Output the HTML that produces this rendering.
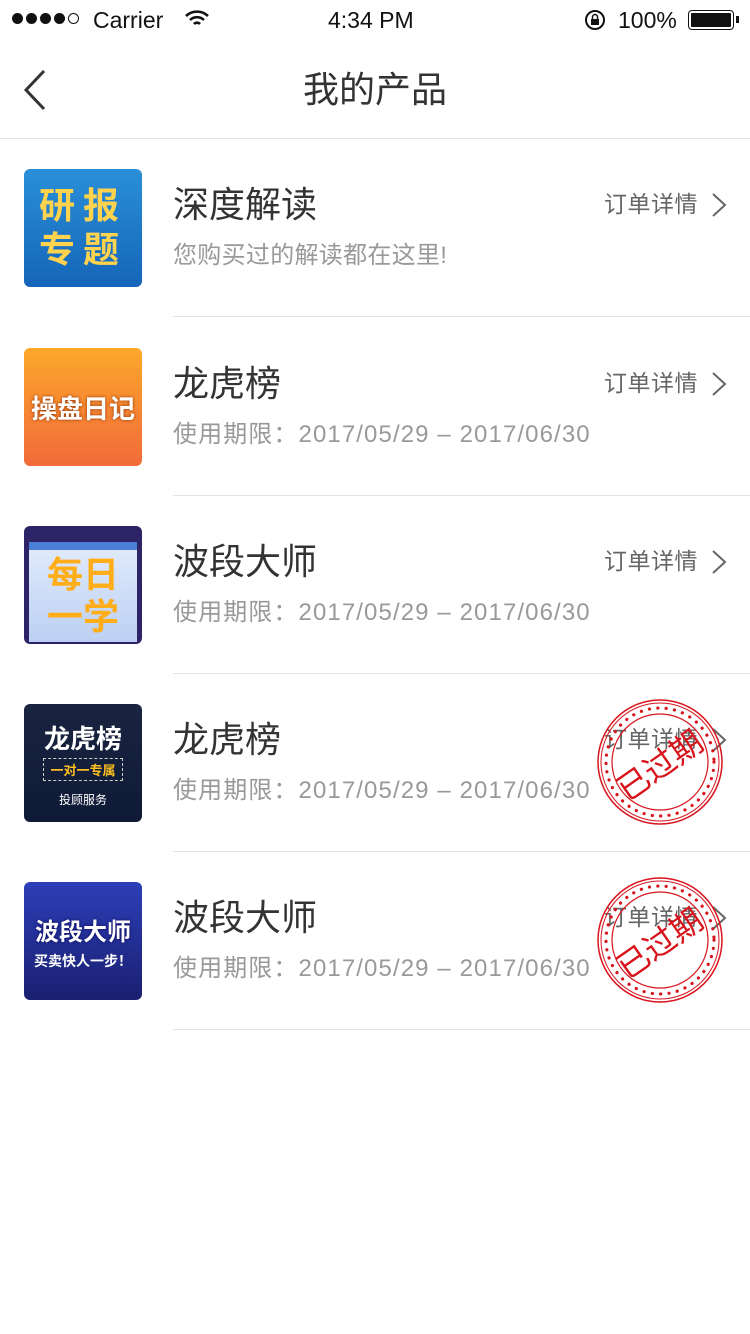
<!DOCTYPE html>
<html><head><meta charset="utf-8"><style>
body{margin:0;width:750px;height:1334px;background:#fff;font-family:"Liberation Sans","Noto Sans CJK SC",sans-serif;position:relative;overflow:hidden}
.abs{position:absolute}
.sb{top:0;left:0;width:750px;height:40px;font-size:23px;color:#111}
.hdr{top:40px;height:98px;width:750px;border-bottom:1px solid #e5e5e5}
.row{position:absolute;left:0;width:750px;height:178px}
.th{position:absolute;left:24px;top:0;width:118px;height:118px;border-radius:6px;overflow:hidden;display:flex;align-items:center;justify-content:center;flex-direction:column;font-weight:bold;text-align:center}
.t{position:absolute;left:173px;top:14px;font-size:36px;color:#333;line-height:44px}
.s{position:absolute;left:173px;top:72px;font-size:24px;color:#999;line-height:30px;letter-spacing:1.1px}
.d{position:absolute;left:604px;top:20px;font-size:23px;color:#666;line-height:30px;letter-spacing:0.5px}
.ch{position:absolute;left:710px;top:22px}
.line{position:absolute;left:173px;right:0;top:147px;height:1px;background:#e5e5e5}
.stamp{position:absolute;left:594px;top:-8px;width:132px;height:132px}
</style></head><body>
<div class="abs sb">
 <div class="abs" style="left:12px;top:13px;display:flex;gap:3px">
  <span style="width:11px;height:11px;border-radius:50%;background:#111"></span><span style="width:11px;height:11px;border-radius:50%;background:#111"></span><span style="width:11px;height:11px;border-radius:50%;background:#111"></span><span style="width:11px;height:11px;border-radius:50%;background:#111"></span><span style="width:9px;height:9px;border-radius:50%;border:1px solid #111"></span>
 </div>
 <div class="abs" style="left:93px;top:7px">Carrier</div>
 <svg class="abs" style="left:184px;top:9px" width="26" height="20" viewBox="0 0 26 20"><path d="M2 7a16 16 0 0 1 22 0M6 11a10 10 0 0 1 14 0M10 15a4 4 0 0 1 6 0" stroke="#111" stroke-width="2.6" fill="none"/></svg>
 <div class="abs" style="left:328px;top:7px">4:34 PM</div>
 <svg class="abs" style="left:584px;top:9px" width="24" height="22"><circle cx="11" cy="11" r="9" stroke="#111" stroke-width="2" fill="none"/><rect x="7" y="10" width="8" height="6" fill="#111"/><path d="M8.5 10V8a2.5 2.5 0 0 1 5 0v2" stroke="#111" stroke-width="1.5" fill="none"/></svg>
 <div class="abs" style="left:618px;top:7px">100%</div>
 <div class="abs" style="left:688px;top:10px;width:44px;height:18px;border:1.5px solid #111;border-radius:4px"><div style="margin:2px;height:14px;background:#111;border-radius:1px"></div></div>
 <div class="abs" style="left:736px;top:16px;width:3px;height:7px;background:#111"></div>
</div>
<div class="abs hdr">
 <svg class="abs" style="left:22px;top:28px" width="26" height="44"><path d="M22 3 4 22 22 41" stroke="#333" stroke-width="3" fill="none"/></svg>
 <div class="abs" style="left:0;width:750px;top:28px;text-align:center;font-size:36px;color:#333;line-height:44px">我的产品</div>
</div>

<div class="row" style="top:169px">
 <div class="th" style="background:linear-gradient(#2a8fd8,#1565b8);color:#ffd34d;font-size:36px;line-height:44px;letter-spacing:8px">研报<br>专题</div>
 <div class="t">深度解读</div><div class="s" style="letter-spacing:0.3px">您购买过的解读都在这里!</div>
 <div class="d">订单详情</div><svg class="ch" width="18" height="28"><path d="M3 3l12 11L3 25" stroke="#666" stroke-width="2" fill="none"/></svg>
 <div class="line"></div>
</div>
<div class="row" style="top:348px">
 <div class="th" style="background:linear-gradient(#fca82a,#f26a3a);color:#fff;font-size:26px;text-shadow:0 0 3px #8a3000">操盘日记</div>
 <div class="t">龙虎榜</div><div class="s">使用期限：2017/05/29 – 2017/06/30</div>
 <div class="d">订单详情</div><svg class="ch" width="18" height="28"><path d="M3 3l12 11L3 25" stroke="#666" stroke-width="2" fill="none"/></svg>
 <div class="line"></div>
</div>
<div class="row" style="top:526px">
 <div class="th" style="background:#2c2466"><div style="width:108px;height:100px;margin-top:14px;background:linear-gradient(#dfe9fb,#bcd0f3);border-top:8px solid #4c7fd8;color:#ffae1a;font-size:36px;line-height:42px;padding-top:4px;box-sizing:border-box">每日<br>一学</div></div>
 <div class="t">波段大师</div><div class="s">使用期限：2017/05/29 – 2017/06/30</div>
 <div class="d">订单详情</div><svg class="ch" width="18" height="28"><path d="M3 3l12 11L3 25" stroke="#666" stroke-width="2" fill="none"/></svg>
 <div class="line"></div>
</div>
<div class="row" style="top:704px">
 <div class="th" style="background:linear-gradient(#1a2440,#0e1a36);color:#fff;font-size:26px"><div>龙虎榜</div><div style="font-size:13px;color:#ffc020;border:1px dashed #ccc;padding:1px 6px;margin:2px 0">一对一专属</div><div style="font-size:12px;font-weight:normal;margin-top:8px">投顾服务</div></div>
 <div class="t">龙虎榜</div><div class="s">使用期限：2017/05/29 – 2017/06/30</div>
 <div class="d">订单详情</div><svg class="ch" width="18" height="28"><path d="M3 3l12 11L3 25" stroke="#666" stroke-width="2" fill="none"/></svg>
 <svg class="stamp" viewBox="0 0 132 132"><circle cx="66" cy="66" r="62" stroke="#d8141c" stroke-width="1.5" fill="none"/><circle cx="66" cy="66" r="59" stroke="#d8141c" stroke-width="1" fill="none"/><circle cx="66" cy="66" r="54" stroke="#d8141c" stroke-width="3.2" stroke-linecap="round" stroke-dasharray="0.1 8.3" fill="none"/><circle cx="66" cy="66" r="48" stroke="#d8141c" stroke-width="1.2" fill="none"/><text x="64" y="80" text-anchor="middle" transform="rotate(-35 66 66)" font-size="32" fill="#d8141c" font-family="Noto Sans CJK SC,sans-serif">已过期</text></svg>
 <div class="line"></div>
</div>
<div class="row" style="top:882px">
 <div class="th" style="background:linear-gradient(#2d3fb8,#1a1f70);color:#fff;font-size:24px"><div style="text-shadow:0 0 3px #0a0a60">波段大师</div><div style="font-size:14px;margin-top:4px">买卖快人一步！</div></div>
 <div class="t">波段大师</div><div class="s">使用期限：2017/05/29 – 2017/06/30</div>
 <div class="d">订单详情</div><svg class="ch" width="18" height="28"><path d="M3 3l12 11L3 25" stroke="#666" stroke-width="2" fill="none"/></svg>
 <svg class="stamp" viewBox="0 0 132 132"><circle cx="66" cy="66" r="62" stroke="#d8141c" stroke-width="1.5" fill="none"/><circle cx="66" cy="66" r="59" stroke="#d8141c" stroke-width="1" fill="none"/><circle cx="66" cy="66" r="54" stroke="#d8141c" stroke-width="3.2" stroke-linecap="round" stroke-dasharray="0.1 8.3" fill="none"/><circle cx="66" cy="66" r="48" stroke="#d8141c" stroke-width="1.2" fill="none"/><text x="64" y="80" text-anchor="middle" transform="rotate(-35 66 66)" font-size="32" fill="#d8141c" font-family="Noto Sans CJK SC,sans-serif">已过期</text></svg>
 <div class="line"></div>
</div>
</body></html>
